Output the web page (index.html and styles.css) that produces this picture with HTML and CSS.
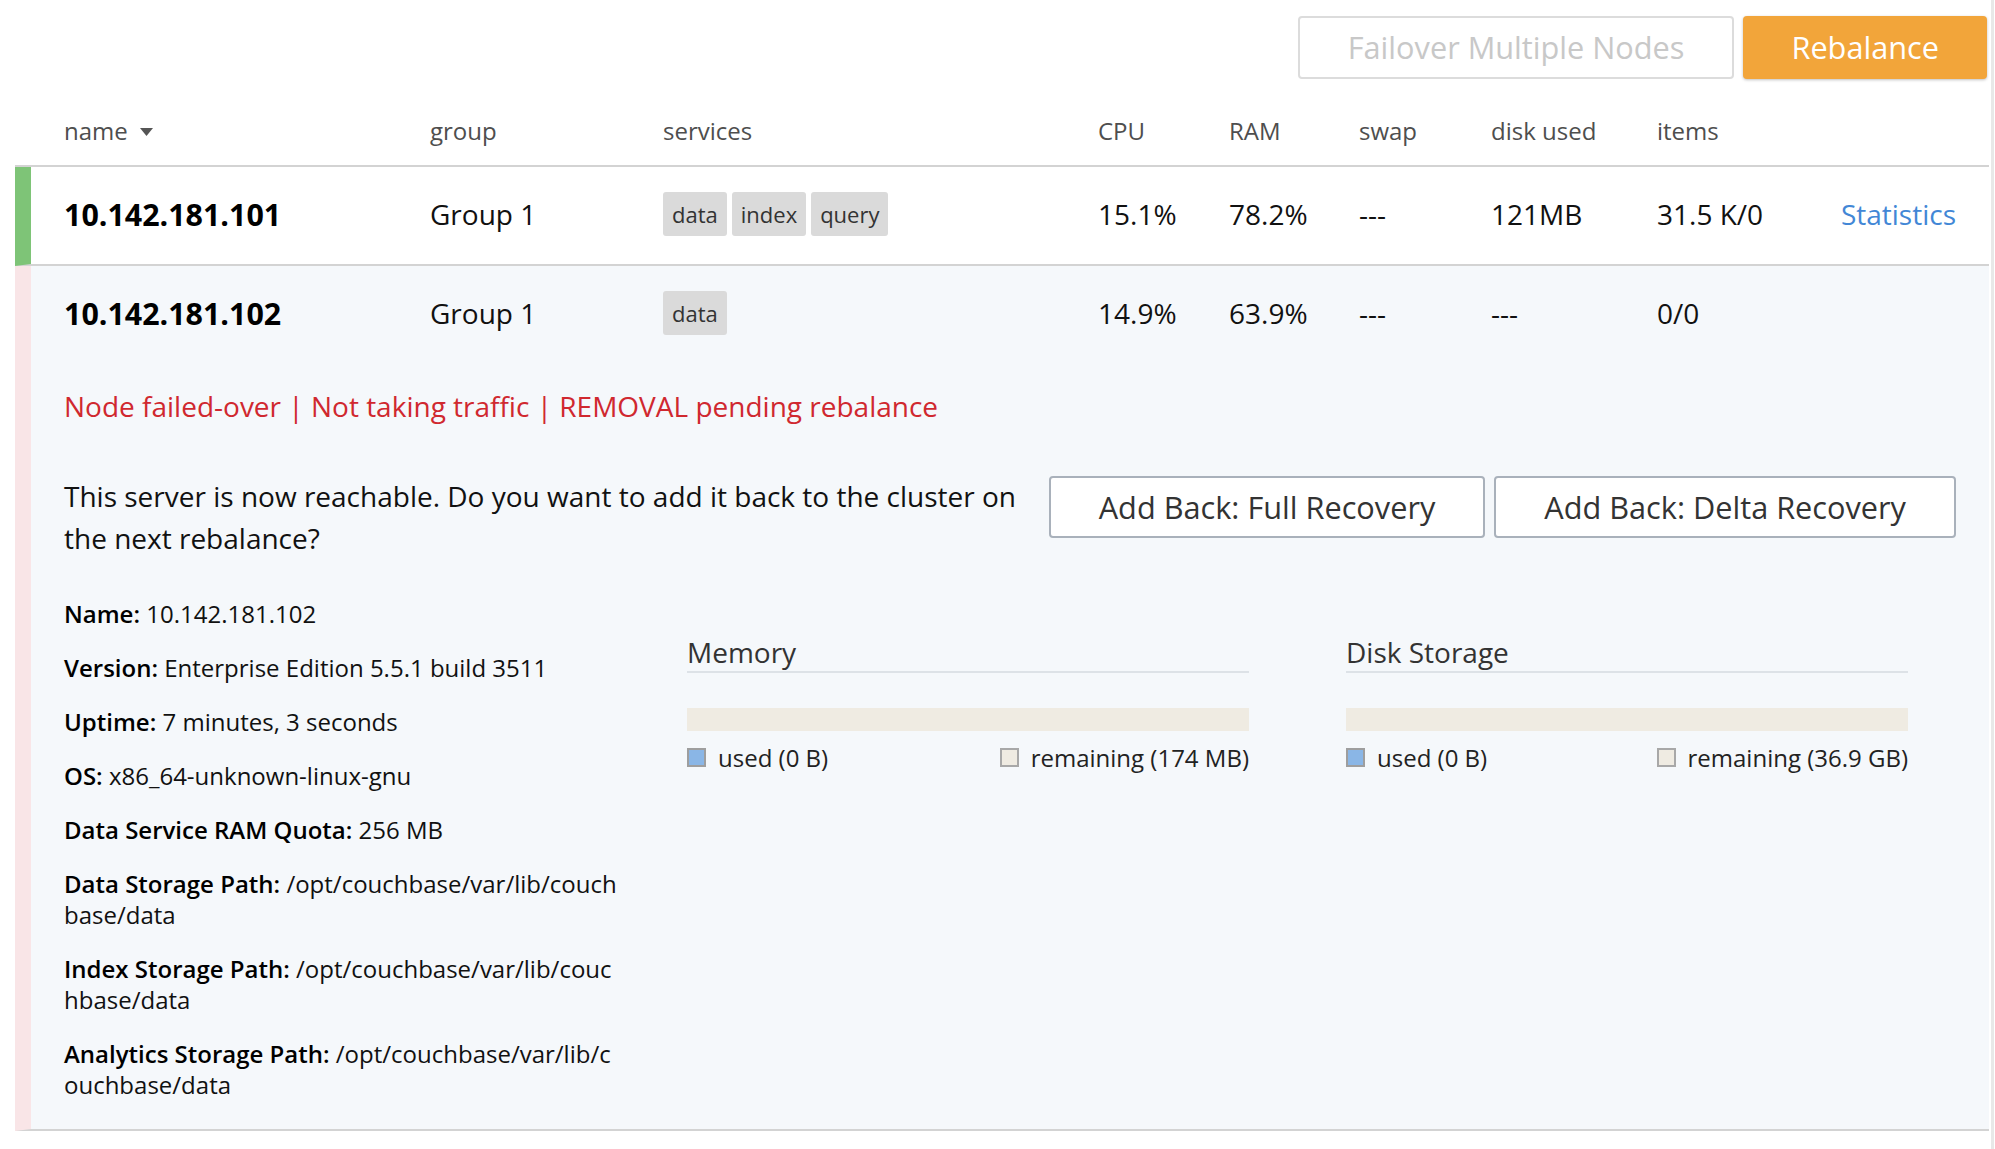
FILE: index.html
```html
<!DOCTYPE html>
<html lang="en">
<head>
<meta charset="utf-8">
<title>Servers</title>
<link rel="stylesheet" href="styles.css">
</head>
<body>
<div class="page">
  <main class="content">
    <div class="toolbar">
      <button class="btn btn-disabled">Failover Multiple Nodes</button>
      <button class="btn btn-orange">Rebalance</button>
    </div>

    <div class="grid thead">
      <div class="th th-sort">name <svg class="caret" width="13" height="8" viewBox="0 0 13 8"><polygon points="0,0 13,0 6.5,8" fill="#555"/></svg></div>
      <div class="th">group</div>
      <div class="th">services</div>
      <div class="th">CPU</div>
      <div class="th">RAM</div>
      <div class="th">swap</div>
      <div class="th">disk used</div>
      <div class="th">items</div>
      <div class="th"></div>
    </div>

    <div class="node node-healthy">
      <div class="grid summary">
        <div class="node-name">10.142.181.101</div>
        <div>Group 1</div>
        <div class="tags"><span class="tag">data</span><span class="tag">index</span><span class="tag">query</span></div>
        <div>15.1%</div>
        <div>78.2%</div>
        <div>---</div>
        <div>121MB</div>
        <div>31.5 K/0</div>
        <div class="stat-cell"><a class="stat-link" href="#">Statistics</a></div>
      </div>
    </div>

    <div class="node node-failed">
      <div class="grid summary">
        <div class="node-name">10.142.181.102</div>
        <div>Group 1</div>
        <div class="tags"><span class="tag">data</span></div>
        <div>14.9%</div>
        <div>63.9%</div>
        <div>---</div>
        <div>---</div>
        <div>0/0</div>
        <div></div>
      </div>

      <div class="node-detail">
        <div class="status">Node failed-over | Not taking traffic | REMOVAL pending rebalance</div>

        <div class="recovery">
          <p class="question">This server is now reachable. Do you want to add it back to the cluster on the next rebalance?</p>
          <div class="recovery-actions">
            <button class="btn btn-outline">Add Back: Full Recovery</button>
            <button class="btn btn-outline">Add Back: Delta Recovery</button>
          </div>
        </div>

        <div class="detail-grid">
          <div class="info">
            <p><strong>Name:</strong> 10.142.181.102</p>
            <p><strong>Version:</strong> Enterprise Edition 5.5.1 build 3511</p>
            <p><strong>Uptime:</strong> 7 minutes, 3 seconds</p>
            <p><strong>OS:</strong> x86_64-unknown-linux-gnu</p>
            <p><strong>Data Service RAM Quota:</strong> 256 MB</p>
            <p><strong>Data Storage Path:</strong> /opt/couchbase/var/lib/couchbase/data</p>
            <p><strong>Index Storage Path:</strong> /opt/couchbase/var/lib/couchbase/data</p>
            <p><strong>Analytics Storage Path:</strong> /opt/couchbase/var/lib/couchbase/data</p>
          </div>

          <div class="usage">
            <h4 class="usage-title">Memory</h4>
            <div class="usage-bar"><div class="usage-used" style="width:0%"></div></div>
            <div class="legend">
              <span class="legend-item"><i class="swatch swatch-used"></i>used (0 B)</span>
              <span class="legend-item"><i class="swatch swatch-free"></i>remaining (174 MB)</span>
            </div>
          </div>

          <div class="usage">
            <h4 class="usage-title">Disk Storage</h4>
            <div class="usage-bar"><div class="usage-used" style="width:0%"></div></div>
            <div class="legend">
              <span class="legend-item"><i class="swatch swatch-used"></i>used (0 B)</span>
              <span class="legend-item"><i class="swatch swatch-free"></i>remaining (36.9 GB)</span>
            </div>
          </div>
        </div>
      </div>
    </div>
  </main>
  <div class="scroll-edge"></div>
</div>
</body>
</html>
```

FILE: styles.css
```css
* { box-sizing: border-box; }

html, body {
  margin: 0;
  padding: 0;
  background: #ffffff;
}

body {
  font-family: "Open Sans", "Noto Sans", "Liberation Sans", sans-serif;
  color: #111;
  font-size: 28px;
}

.page {
  display: flex;
  min-height: 1149px;
}

.content {
  width: 1974px;
  margin-left: 15px;
}

.scroll-edge {
  width: 3px;
  margin-left: 2px;
  background: #e8e8e8;
}

/* toolbar */
.toolbar {
  display: flex;
  justify-content: flex-end;
  gap: 9px;
  padding-top: 16px;
  padding-right: 2px;
}

.btn {
  font-family: inherit;
  font-size: 30.7px;
  height: 63px;
  padding: 0 48px;
  border-radius: 4px;
  background: #fff;
  cursor: pointer;
  line-height: 1;
}

.btn-disabled {
  border: 2px solid #dcdcdc;
  color: #c8c8c8;
}

.btn-orange {
  border: 0;
  background: #f2a53a;
  color: #fff;
  padding: 0 48px;
  box-shadow: 0 1px 3px rgba(0, 0, 0, 0.25);
}

.btn-outline {
  height: 62px;
  border: 2px solid #a9b1bb;
  color: #333;
  padding: 0 48px;
}

/* table grid */
.grid {
  display: grid;
  grid-template-columns: 366px 233px 435px 131px 130px 132px 166px 150px 1fr;
  align-items: center;
}

.thead {
  padding: 36px 33px 18px 49px;
  border-bottom: 2px solid #d3d3d3;
  font-size: 24px;
  line-height: 32px;
  color: #4e4e4e;
}

.th-sort {
  display: flex;
  align-items: center;
  gap: 12px;
}

.caret { display: block; margin-top: 2px; }

.node {
  border-left: 16px solid #7ec477;
  border-bottom: 2px solid #d3d3d3;
  padding: 0 33px 0 33px;
}

.node-failed {
  border-left-color: #f9e5e7;
  background: #f5f8fb;
  padding-bottom: 6px;
}

.summary {
  height: 97px;
  padding-bottom: 3px;
  font-size: 28px;
  color: #111;
}

.node-name {
  font-size: 30.4px;
  font-weight: 700;
  color: #000;
}

.tags {
  display: flex;
  gap: 5px;
}

.tag {
  display: inline-block;
  height: 44px;
  line-height: 44px;
  padding: 0 9px;
  font-size: 22px;
  background: #dadada;
  color: #333;
  border-radius: 3px;
}

.stat-cell { text-align: right; }

.stat-link {
  color: #4287d6;
  text-decoration: none;
}

/* detail area */
.node-detail {
  padding-top: 22px;
}

.status {
  color: #d0282f;
  font-size: 28px;
  line-height: 42px;
}

.recovery {
  display: flex;
  align-items: flex-start;
  margin-top: 48px;
}

.question {
  flex: 1;
  margin: 0;
  font-size: 28px;
  line-height: 42px;
  color: #111;
}

.recovery-actions {
  display: flex;
  gap: 9px;
  margin-left: 18px;
  margin-top: 1px;
}

.detail-grid {
  display: grid;
  grid-template-columns: 623px 659px 562px;
  margin-top: 39px;
  align-items: start;
}

.info {
  width: 560px;
  font-size: 24px;
  line-height: 31px;
  color: #111;
  word-break: break-all;
}

.info p {
  margin: 0 0 23px;
}

.info strong {
  font-weight: 600;
  color: #000;
}

.usage {
  padding-top: 36px;
  width: 562px;
}

.usage-title {
  margin: 0;
  font-size: 28px;
  font-weight: 400;
  line-height: 36px;
  padding-bottom: 1px;
  color: #333;
  border-bottom: 2px solid #dde2e7;
}

.usage-bar {
  margin-top: 35px;
  height: 23px;
  background: #efebe2;
}

.usage-used {
  height: 100%;
  background: #8ab6e6;
}

.legend {
  display: flex;
  justify-content: space-between;
  margin-top: 11px;
  font-size: 24px;
  line-height: 31px;
  color: #222;
}

.legend-item {
  display: flex;
  align-items: center;
  gap: 12px;
}

.swatch {
  display: inline-block;
  width: 19px;
  height: 19px;
  border: 2px solid #9e9e9e;
}

.swatch-used { background: #8ab6e6; }
.swatch-free { background: #efebe2; border-color: #a8a8a8; }
```
